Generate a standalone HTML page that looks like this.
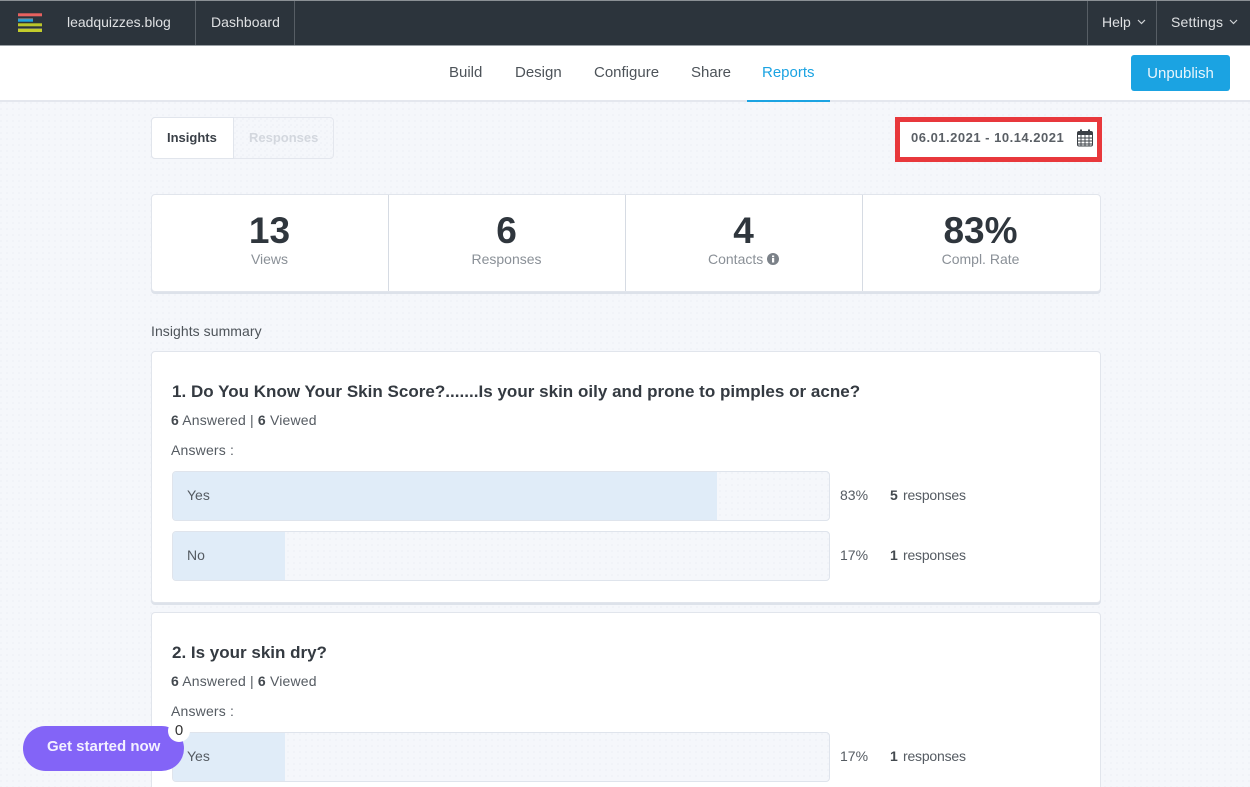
<!DOCTYPE html>
<html style="width:1250px;height:787px;overflow:hidden"><head><meta charset="utf-8">
<style>
*{box-sizing:border-box}
html,body{margin:0;padding:0}
body{width:1250px;height:787px;overflow:hidden;position:relative;background-color:#f5f7fb;font-family:"Liberation Sans",sans-serif;color:#555b62}
#w{position:absolute;left:0;top:0;width:1250px;height:787px;overflow:hidden}
.dots{background-image:radial-gradient(circle at 1px 1px,#e6e9f0 .6px,transparent .8px);background-size:6px 6px}
.a{position:absolute}
.t{position:absolute;white-space:nowrap;font-size:14px;line-height:18px}
b{font-weight:700;color:#43494f}
.card{position:absolute;left:151px;width:950px;background:#fff;border:1px solid #e1e5ec;border-radius:4px}
.bar{position:absolute;left:172px;width:658px;height:50px;border:1px solid #dfe4ec;border-radius:4px;overflow:hidden;background-color:#f5f7fb}
.fill{position:absolute;left:0;top:0;bottom:0;background:#e0ecf8}
.num{position:absolute;width:237px;text-align:center;font-size:37px;line-height:40px;font-weight:700;color:#2f363d;top:211px}
.lab{position:absolute;width:237px;text-align:center;font-size:14px;line-height:18px;color:#8a9097;top:250px}
.sep{position:absolute;top:195px;width:1px;height:96px;background:#d6dbe3}
.nav{color:#4d5359;font-size:15px;top:64px}
.s{letter-spacing:.18px}
.r{letter-spacing:-.2px}
</style></head><body><div id="w">
<div class="a dots" style="left:0;top:102px;width:1250px;height:685px"></div>

<!-- top bar -->
<div class="a" style="left:0;top:0;width:1250px;height:46px;background:#2c343c;border-top:1px solid #8b9095;border-bottom:1px solid #9aa0a5"></div>
<svg class="a" style="left:18px;top:13px" width="24" height="20" viewBox="0 0 24 20">
<rect y="0.300" width="24" height="3" fill="#e8615f"/>
<rect y="5.300" width="15" height="1.200" fill="#7d8388"/><rect y="6.300" width="15" height="2.400" fill="#1fa3e0"/>
<rect y="10.300" width="24" height="3" fill="#bcc62a"/>
<rect y="15" width="24" height="1.200" fill="#6f7350"/>
<rect y="16" width="24" height="3" fill="#c3cc2c"/>
</svg>
<div class="t" style="left:67px;top:13px;color:#dfe1e3;letter-spacing:-.03px">leadquizzes.blog</div>
<div class="a" style="left:195px;top:1px;width:1px;height:44px;background:#575e65"></div>
<div class="t" style="left:211px;top:13px;color:#dfe1e3;letter-spacing:.05px">Dashboard</div>
<div class="a" style="left:294px;top:1px;width:1px;height:44px;background:#575e65"></div>
<div class="a" style="left:1087px;top:1px;width:1px;height:44px;background:#575e65"></div>
<div class="t" style="left:1102px;top:13px;color:#dfe1e3">Help</div>
<svg class="a" style="left:1137px;top:19px" width="9" height="6" viewBox="0 0 9 6"><path d="M1 1l3.500 3.500L8 1" fill="none" stroke="#cfd2d5" stroke-width="1.200"/></svg>
<div class="a" style="left:1156px;top:1px;width:1px;height:44px;background:#575e65"></div>
<div class="t" style="left:1171px;top:13px;color:#dfe1e3;letter-spacing:.2px">Settings</div>
<svg class="a" style="left:1229px;top:19px" width="9" height="6" viewBox="0 0 9 6"><path d="M1 1l3.500 3.500L8 1" fill="none" stroke="#cfd2d5" stroke-width="1.200"/></svg>

<!-- sub nav -->
<div class="a" style="left:0;top:46px;width:1250px;height:56px;background:#fff;border-bottom:2px solid #e4e7ee"></div>
<div class="t nav" style="left:449px">Build</div>
<div class="t nav" style="left:515px">Design</div>
<div class="t nav" style="left:594px">Configure</div>
<div class="t nav" style="left:691px">Share</div>
<div class="t nav" style="left:762px;color:#1ba3e2">Reports</div>
<div class="a" style="left:747px;top:100px;width:83px;height:2px;background:#1ba3e2"></div>
<div class="a" style="left:1131px;top:55px;width:99px;height:36px;background:#1ba3e2;border-radius:3px"></div>
<div class="t" style="left:1131px;top:65px;width:99px;text-align:center;color:#e8f5fc;font-size:15px">Unpublish</div>

<!-- tabs -->
<div class="a dots" style="left:151px;top:117px;width:183px;height:42px;border:1px solid #e4e7ee;border-radius:4px"></div>
<div class="a" style="left:151px;top:117px;width:83px;height:42px;background:#fff;border:1px solid #e1e5ec;border-radius:4px 0 0 4px"></div>
<div class="t" style="left:167px;top:129px;font-size:13px;font-weight:700;color:#3a4047">Insights</div>
<div class="t" style="left:249px;top:129px;font-size:13px;font-weight:700;color:#d3d7de">Responses</div>

<!-- date -->
<div class="a" style="left:895px;top:117px;width:207px;height:45px;background:#fff;border:5px solid #e8383c"></div>
<div class="t" style="left:911px;top:129px;font-size:13px;font-weight:700;color:#5a5f65;letter-spacing:.5px">06.01.2021 - 10.14.2021</div>
<svg class="a" style="left:1077px;top:129px" width="16" height="18" viewBox="0 0 16 18">
<rect x=".5" y="2.500" width="15" height="14.500" rx="1.500" fill="#fff" stroke="#3b4046"/>
<rect x=".5" y="2.500" width="15" height="3.500" fill="#3b4046"/>
<path d="M.5 9h15M.5 12h15M.5 15h15M4 6v11M8 6v11M12 6v11" stroke="#3b4046" stroke-width=".9"/>
<path d="M4 .5v3.500M12 .5v3.500" stroke="#3b4046" stroke-width="2"/>
</svg>

<!-- stats -->
<div class="card" style="top:194px;height:98px;box-shadow:0 2px 0 #dde2ea"></div>
<div class="sep" style="left:388px"></div><div class="sep" style="left:625px"></div><div class="sep" style="left:862px"></div>
<div class="num" style="left:151px">13</div><div class="lab" style="left:151px">Views</div>
<div class="num" style="left:388px">6</div><div class="lab" style="left:388px">Responses</div>
<div class="num" style="left:625px">4</div>
<div class="t" style="left:708px;top:250px;color:#8a9097">Contacts</div>
<svg class="a" style="left:767px;top:253px" width="12" height="12" viewBox="0 0 12 12"><circle cx="6" cy="6" r="6" fill="#7b8188"/><rect x="5" y="5" width="2.200" height="4.500" fill="#fff"/><rect x="5" y="2.500" width="2.200" height="1.700" fill="#fff"/></svg>
<div class="num" style="left:862px">83%</div><div class="lab" style="left:862px">Compl. Rate</div>

<div class="t" style="left:151px;top:322px;color:#4d5359;letter-spacing:.06px">Insights summary</div>

<!-- Q1 -->
<div class="card" style="top:351px;height:252px;box-shadow:0 2px 0 #dde2ea"></div>
<div class="t" style="left:172px;top:381px;font-size:17px;line-height:22px;font-weight:700;color:#343a41;letter-spacing:.02px">1. Do You Know Your Skin Score?.......Is your skin oily and prone to pimples or acne?</div>
<div class="t s" style="left:171px;top:411px"><b>6</b> Answered | <b>6</b> Viewed</div>
<div class="t s" style="left:171px;top:441px">Answers :</div>
<div class="bar dots" style="top:471px"><div class="fill" style="width:544px"></div></div>
<div class="t" style="left:187px;top:486px">Yes</div>
<div class="t" style="left:840px;top:486px">83%</div>
<div class="t" style="left:890px;top:486px"><b>5</b></div><div class="t r" style="left:903px;top:486px">responses</div>
<div class="bar dots" style="top:531px"><div class="fill" style="width:112px"></div></div>
<div class="t" style="left:187px;top:546px">No</div>
<div class="t" style="left:840px;top:546px">17%</div>
<div class="t" style="left:890px;top:546px"><b>1</b></div><div class="t r" style="left:903px;top:546px">responses</div>

<!-- Q2 -->
<div class="card" style="top:612px;height:190px"></div>
<div class="t" style="left:172px;top:642px;font-size:17px;line-height:22px;font-weight:700;color:#343a41">2. Is your skin dry?</div>
<div class="t s" style="left:171px;top:672px"><b>6</b> Answered | <b>6</b> Viewed</div>
<div class="t s" style="left:171px;top:702px">Answers :</div>
<div class="bar dots" style="top:732px"><div class="fill" style="width:112px"></div></div>
<div class="t" style="left:187px;top:747px">Yes</div>
<div class="t" style="left:840px;top:747px">17%</div>
<div class="t" style="left:890px;top:747px"><b>1</b></div><div class="t r" style="left:903px;top:747px">responses</div>

<!-- floating -->
<div class="a" style="left:23px;top:726px;width:161px;height:45px;background:#8364f7;border-radius:23px"></div>
<div class="t" style="left:47px;top:738px;font-size:15px;font-weight:700;color:#f3f0ff">Get started now</div>
<div class="a" style="left:168px;top:720px;width:22px;height:22px;background:#fff;border-radius:50%"></div>
<div class="t" style="left:168px;top:722px;width:22px;text-align:center;font-size:15px;color:#333">0</div>
</div></body></html>
